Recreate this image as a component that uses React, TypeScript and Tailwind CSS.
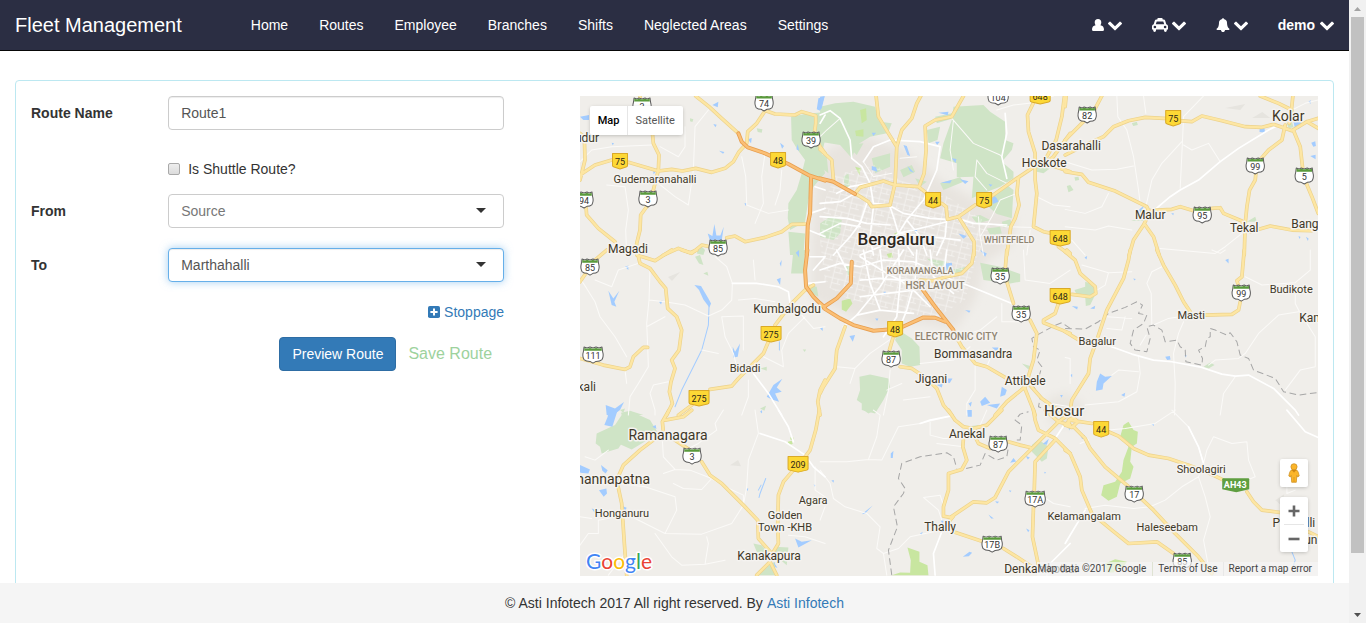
import { useState } from "react";

/* ---------- Icons ---------- */

function UserIcon() {
  return (
    <svg className="h-3 w-3" viewBox="0 0 12 12" fill="currentColor" aria-hidden="true">
      <path d="M6 0C8.2 0 9.3 1.5 9.3 3.5C9.3 4.7 8.9 5.6 8.4 6.2C10.6 6.4 12 8.2 12 10.4Q12 12 10.6 12H1.4Q0 12 0 10.4C0 8.2 1.4 6.4 3.6 6.2C3.1 5.6 2.7 4.7 2.7 3.5C2.7 1.5 3.8 0 6 0Z" />
    </svg>
  );
}

function TaxiIcon() {
  return (
    <svg className="h-3.5 w-4" viewBox="0 0 16 14" aria-hidden="true">
      <path
        fill="currentColor"
        fillRule="evenodd"
        d="M5.3 1.2Q5.3 0 6.3 0H9.7Q10.7 0 10.7 1.2V1.6H11.6Q12.8 1.6 13.2 2.8L14.3 6.2Q16 6.7 16 8.3V11.6H14.8V12.6Q14.8 14 13.4 14Q12 14 12 12.6V11.6H4V12.6Q4 14 2.6 14Q1.2 14 1.2 12.6V11.6H0V8.3Q0 6.7 1.7 6.2L2.8 2.8Q3.2 1.6 4.4 1.6H5.3ZM4.7 3.4L3.8 6.2H12.2L11.3 3.4ZM2.9 7.7A1.3 1.3 0 1 0 2.9 10.3A1.3 1.3 0 1 0 2.9 7.7ZM13.1 7.7A1.3 1.3 0 1 0 13.1 10.3A1.3 1.3 0 1 0 13.1 7.7Z"
      />
    </svg>
  );
}

function BellIcon() {
  return (
    <svg className="h-3.5 w-3.5" viewBox="64 0 1664 1792" fill="currentColor" aria-hidden="true">
      <path d="M1728 1408q0 52-38 90t-90 38h-448q0 106-75 181t-181 75-181-75-75-181h-448q-52 0-90-38t-38-90q50-42 91-88t85-119.5 74.5-158.5 50-206 19.5-260q0-152 117-282.5t307-158.5q-8-19-8-39 0-40 28-68t68-28 68 28 28 68q0 20-8 39 190 28 307 158.5t117 282.5q0 139 19.5 260t50 206 74.5 158.5 85 119.5 91 88z" />
    </svg>
  );
}

function ChevronIcon() {
  return (
    <svg className="h-3.5 w-3.5" viewBox="90 128 1612 1612" fill="currentColor" aria-hidden="true">
      <path d="M1683 808l-742 741q-19 19-45 19t-45-19l-742-741q-19-19-19-45.5t19-45.5l166-165q19-19 45-19t45 19l531 531 531-531q19-19 45-19t45 19l166 165q19 19 19 45.5t-19 45.5z" />
    </svg>
  );
}

function PlusSquareIcon() {
  return (
    <svg className="h-3 w-3" viewBox="0 0 12 12" aria-hidden="true">
      <rect width="12" height="12" rx="1.8" fill="currentColor" />
      <path d="M6 2.4V9.6M2.4 6H9.6" stroke="#fff" strokeWidth="2" />
    </svg>
  );
}

/* ---------- Map data ---------- */

type Tile = {
  x: number;
  y: number;
  park: string;
  grass: string;
  water: string;
  river: string;
  lane: string;
  street: string;
  road: string;
  highway: string;
  border: string;
};

// Each tile covers 245 x 160 map pixels; its paths use three units per pixel.
const TILES: Tile[] = [
  {
    x: 575,
    y: 90,
    park: "M648 80L690 72L750 66V150L738 200L750 250L715 290L700 330L690 395L645 420L638 385L640 340L665 300L680 250L690 210L668 180L650 150ZM640 425L690 430L685 495H645ZM545 115L562 118L560 128L548 126ZM345 85L355 88L352 96L345 94ZM365 490L375 465L390 480L385 495Z",
    grass: "",
    water: "M15 80L42 75V90H25ZM412 45L430 35L428 52ZM730 25L748 20L735 62L725 58ZM415 102l10 2-4 8zM615 158l12 10-6 8zM668 162l4 20-8-4zM518 148l12-4-2 16zM432 182l16 4-4 5zM508 340l8 0-4 8zM398 430L412 438L418 402L424 436L436 436L446 410L440 452L420 448L408 462ZM110 158l7 2-4 6zM235 240l6 8-6 4z",
    river: "",
    lane: "M95 285L150 290L160 360L152 420L155 495M250 280L300 320L340 345L355 240L360 110L400 60M255 170L310 200L330 170L330 110M515 345L512 260L500 200M515 345L580 370L640 360M15 215L50 180L110 170L230 165M570 190L560 260L565 340L540 400M620 240L615 300L600 345",
    street: "M735 100L750 75M720 290L750 300M705 370L750 355M700 420L750 440",
    road: "M362 18L402 50L440 85L490 130M570 62L545 100L518 125L515 160L492 185L475 215L450 235L410 247L362 235L322 243L290 238L250 243L165 218L110 210L60 225L15 255M572 62L600 72L660 75L680 65L722 77V100L718 130L735 170L750 190M195 18V40L228 85L235 160L252 195L250 240L235 300L215 350L197 375L195 420L185 460V495M15 130L28 140L30 210L15 270M33 350L35 375L70 415L120 455M690 402L650 403L620 425L570 442L510 455L480 438L455 443M405 470L380 465L350 490L310 475L265 495",
    highway: "M490 130L500 155L518 172L570 190L640 222L700 255L750 272M708 260L705 370L698 405L695 495",
    border: "",
  },
  {
    x: 820,
    y: 90,
    park: "M0 50L45 40L100 35L165 50L175 90L200 130L150 140L110 165L95 205L60 165L0 155ZM400 50L490 45L510 65L555 95V150L580 160L575 180L545 215L580 245V265L540 290L490 310L455 325L460 260L410 262L410 220L360 205L370 160L395 90ZM500 320L560 285L580 300L575 385L530 372L505 350ZM155 205L210 190V230L165 250ZM320 120L360 110L352 150L325 160ZM180 95L215 100L205 125ZM0 400L30 380L65 390L60 430L40 450L0 440ZM650 225L690 235L670 250L650 245ZM360 280L420 262L430 275L370 300ZM345 80L395 70L400 85L350 100ZM455 380L480 375L510 390L470 400ZM0 190L20 200L25 250L0 230ZM70 260L85 250L90 290L75 300ZM240 240L275 225L285 245L250 262ZM500 415L540 410L545 430L510 435ZM545 395L570 388L578 405L550 412ZM285 265L320 275L300 290ZM80 165L130 160L110 195Z",
    grass: "M120 60L138 55L140 90L125 100ZM105 122L130 118V140L108 138ZM105 230L122 235L118 255ZM222 430L236 425L238 440L226 442Z",
    water: "M0 20L14 18L5 55L0 60ZM155 228L168 232L172 245L155 240ZM250 165L260 168L270 198L262 195ZM262 228L282 248L270 244ZM355 68L385 65L383 76ZM395 205l14 2-3 12zM362 278L395 270L390 280ZM420 268L445 274L435 282ZM280 415l12 3-4 14zM515 310L530 325L535 335L518 342ZM415 430L440 438L430 446ZM155 128L168 128L160 138ZM608 210l10 5-6 14zM505 282l12 2-6 6zM345 155l14 0-8 10z",
    river: "",
    lane: "M640 38L580 45L530 60M395 85L460 160L540 195L545 200M470 210L500 250L560 280M470 210L465 260L500 300M400 90L390 180L400 240M700 18L650 30M650 320L700 345L750 350M590 310L540 330L515 380L480 440L490 495M475 380L480 440M500 400L560 410L640 412M630 420L620 495M215 250L160 260L130 215M290 200L240 205M60 85L20 120L0 140",
    street: "M0 75L30 62L60 85L90 150L95 205L125 230L150 280L160 340L205 345L250 370L330 385L380 388M130 215L160 170L210 150L300 155L360 170L350 240L310 330L260 390L235 430M555 70L560 130L545 200L560 265M380 395L320 410L235 430L180 470L120 495M208 345L220 380L235 430L280 495M0 340L60 335L105 310M150 280L90 290L50 310M0 380L80 385L140 400L210 405M140 340L120 400L90 440L40 495M160 350L150 440L160 495M0 430L60 400L120 410M380 388L375 440L350 495M260 390L300 440L320 495M410 385L460 400L560 405M235 430L330 440L420 450",
    road: "M168 18L175 80L205 130L230 170L225 280L210 345L155 350L145 335L105 310L120 292L190 273L225 285L295 290L320 310M230 170L245 120L275 85L290 40L302 18M430 18L395 80L345 90L315 108L318 180L312 250L297 290M365 340L378 350L382 388L415 380L465 345M515 318L590 265L635 235L645 205M415 380L440 420L462 455V495M640 38L622 75L625 125L645 190V270L650 310L640 410L670 425L695 430M733 18L725 80L708 150L680 200M750 130L700 200L680 215M690 225L750 245M595 262L590 310L597 345L585 385L572 410L560 495M0 178L35 210L40 270M715 470L750 495",
    highway: "M0 265L40 275L105 312",
    border: "",
  },
  {
    x: 1065,
    y: 90,
    park: "M198 392L240 380L235 392ZM200 100L215 95L218 105L204 108ZM5 288L15 285L25 300L10 307ZM28 262L40 260L42 270L30 272ZM665 100L680 95L685 112L670 115ZM545 395L570 380L575 395Z",
    grass: "",
    water: "M583 118L597 112L600 128L583 126ZM685 95L718 98L700 118L688 110ZM730 35l6-5 0 12zM738 158l12-4 2 14-8 2zM735 198l16-4 0 14zM220 360L235 348L232 368L222 372ZM318 370l8 0-2 6zM722 440l8 5-2 8zM700 438l6 3-4 6z",
    river: "",
    lane: "M155 18L158 80L185 120L205 200L220 300L225 340M415 18L355 80L352 150L345 295M350 155L290 220L260 270L243 345M355 165L380 180L430 160L465 215M0 215L80 240L155 238L205 228M130 310L110 350L60 370L0 358M0 410L90 420L130 408L200 420M285 475L450 490L480 470L530 430M235 18L242 70M20 450L60 495M680 60L720 40L759 30",
    street: "M270 358L315 320L345 300L400 270L465 215L520 175L610 120L630 110",
    road: "M0 195L60 165L115 140L145 110L190 92L240 82L310 86M340 92L380 95L410 78L470 92L540 110L590 112L625 103M110 18L85 65L30 120L0 150M3 18L0 50M585 18L640 40L680 60L672 100M683 18L678 65M660 105L650 150L610 180L575 220L570 270L553 300L545 350L540 400L537 495M625 103L680 122L725 95L759 85M725 95L759 115M685 122L705 170L715 260L740 320L759 370M0 245L50 253L70 277L150 303L245 350L250 362L320 358L345 350L385 362M440 355L465 353L475 370L530 393L540 425M555 425L615 408L680 420L740 422M245 385L235 405L205 450L192 495M240 405L265 440L282 495",
    highway: "",
    border: "",
  },
  {
    x: 575,
    y: 250,
    park: "M655 0H690L685 70H648ZM138 488L165 482L205 495H140ZM360 20L375 15L385 45L372 40ZM555 355l20-5 0 12zM385 70l12-5 3 12zM555 475l18-8-5 15zM683 298l10 0-4 8zM700 105L725 110L730 140L710 130Z",
    grass: "",
    water: "M358 105L378 108L400 145L408 160L403 172L385 148L372 120ZM100 122L115 145L133 122L118 155L124 170L110 165ZM473 290L480 305L495 280L488 320L475 322ZM575 440L595 405L622 386L605 412L620 425L600 430L612 455L590 448ZM92 465L120 475L147 456L135 480L115 495H95ZM605 88l12-5-2 22zM662 8l10-8 0 22zM150 50l10-4 0 14zM252 155l10-4-4 12zM614 40l6-10-2 20zM735 235l8-4 0 12z",
    river: "M402 165L400 225L380 300L355 350L320 420L300 470M613 275V300",
    lane: "M15 85L35 115L60 155L75 200L120 260L155 320M225 55L222 150L215 220L218 290L220 350L190 400L165 440L160 495M222 150L270 155L330 165L400 198L440 180L470 150L472 100L455 50L420 20M440 200L505 198V300M440 200L450 260L475 310L485 350M280 395L235 405L225 430L240 480V495M565 320L625 350L620 300L640 250L690 200M490 150L540 145L600 155M535 30L540 90M60 90L110 110L130 60L190 40M270 200L215 230M680 195L715 235L750 230M520 390V440L500 495M150 360L155 400M380 300L430 310",
    street: "M472 100L545 100L610 110L640 125L645 160M535 370L580 430L620 495M715 60L750 20M700 100L750 95M705 20H750",
    road: "M95 0L60 30L15 95M185 0L195 40L225 55L255 95L272 115L278 175L305 200L320 240L312 300L290 330L300 355L288 395L283 425L292 460L275 495M195 18L240 32L290 0M320 0L345 8L365 0M715 105L690 120L650 160L600 225M580 275L565 310L530 345L490 385L470 408L405 418M350 465L310 495M15 325L85 345L150 358L165 350L175 320L205 292H218M750 390L735 420L728 455L735 495",
    highway: "M697 0L690 60L693 110L715 140L750 175",
    border: "",
  },
  {
    x: 820,
    y: 250,
    park: "M118 380L150 373L205 385L210 410L190 450L165 490L125 480V460L110 450L120 420ZM235 240L275 265L298 290L300 345L270 350L245 340V300L225 270ZM320 25L380 35L370 60L350 50ZM480 38L540 50L600 72V95L570 100L490 90ZM605 340l25 8-5 10zM385 60L440 50L420 75ZM75 50L100 45L85 80Z",
    grass: "M65 152L90 145L97 160L78 185L65 178ZM200 12L215 8L218 22L205 24Z",
    water: "M375 40L395 38L398 60L380 62ZM88 258L105 255L98 275ZM480 455L495 440L510 458L485 468ZM545 410L560 420L555 435L540 440ZM375 385l22 0-8 14-14-2zM515 292l20 0-5 12zM165 205l10 0-4 8zM435 180l16 2-4 6zM480 0l20 10-5 10zM445 460L455 455L452 470ZM190 125l8 0-4 10zM500 465L540 460L530 475ZM350 405L370 395L365 412ZM720 435l8 0-4 8z",
    river: "",
    lane: "M50 350L105 355L150 310L215 265M105 355L90 400M465 345L465 420L440 460V495M545 215V160M610 0L615 90L690 100L750 60M450 290L400 330L300 340M210 360L205 420L190 495M530 200L480 240L420 260M545 215L600 215M690 460L750 470M500 350L520 300M245 400L200 420M330 440L250 450",
    street: "M190 260L230 200L240 100L235 0M440 105L490 125L575 160M70 230L110 195L180 110L250 0M300 90L240 90L200 70L120 20M120 90L180 85L240 90L280 120L330 170M0 60L60 40L120 50L190 30L280 35L340 60M130 0L150 100L180 180M50 0L80 60M180 0L190 90M290 0L285 90L260 180L240 230M330 0L340 80L400 130M110 195L180 180L280 190M280 120L200 130L120 140M380 0L370 80L440 105",
    road: "M462 0L455 40L425 70L380 80L340 92L300 90M400 245L425 290L465 340L500 350L560 385L610 390M75 230L50 300L45 355L10 410L0 430M218 265L208 300M240 350L275 355L320 385L350 415L370 465L395 495M560 0L555 60M560 95L580 160M630 210L650 250L640 330L615 410L560 455L525 495M612 410L640 480L645 495M625 400L665 445L735 495M715 160L705 190L670 210V218L750 250M740 0L750 10",
    highway: "M95 35L92 100L50 145L12 170L0 160M12 175L60 205L100 225L160 242L205 238M248 230L310 202L345 203L375 215M305 115L345 170L400 240",
    border: "M750 235L725 218L700 228L660 250L635 265L640 290L660 300L650 330L665 350L655 385L630 395L650 425L660 445L655 470L680 480",
  },
  {
    x: 1065,
    y: 250,
    park: "M28 120L60 110V95L90 105L92 130L75 165L62 168L60 140L35 135ZM415 350L435 337L448 345L430 355Z",
    grass: "",
    water: "M95 395L105 370L120 380L140 378L115 400L112 418L92 422ZM20 168l18 2-2 8zM75 175l15-8-2 10zM300 320l14-2 2 10-10 2zM168 435l12-7-2 12zM480 30l10-4 0 14zM15 375l6-3 0 10zM358 315l6 0-2 8zM58 22l8-4-2 10zM204 85l8 2-4 4z",
    river: "",
    lane: "M355 215L340 250L325 310L330 400L328 495M243 255L225 285M260 225L258 130L245 100L260 65L290 50M375 195L310 205L265 225M540 80L590 105L690 98L735 60V0M690 110V160L700 180L750 260V350L705 360L660 420M700 185L640 195L580 250L540 310L520 325L450 330L430 345M510 380L475 430L465 495M50 45L130 68L200 65M130 68L120 105L95 120M220 320L225 370L215 425L160 455L60 465M220 365L160 360L140 375M0 322L15 325V400M125 200L200 205M125 235L170 240L180 200M440 0L465 10L480 0",
    street: "M125 285L200 312L265 330L320 335L410 352L470 372L510 378L550 375L625 415L690 480L700 495",
    road: "M0 5L30 30L45 70L90 110L92 130L75 140L20 133M195 0L190 30L175 85L125 180L95 270L75 325L70 370L20 450L15 480M275 0L295 45L330 105L355 155L375 185M415 195L500 193L520 180L525 155M520 108L515 92L530 80L537 0M0 245L38 268",
    highway: "",
    border: "M0 235L60 237L100 215L130 190L180 172L215 155L232 165L220 190L245 195L235 220L205 240L195 280L210 300L245 305L255 265L245 230L265 225L290 240L300 275L335 270L345 290L360 300L362 335L410 345L412 325L400 300L420 290L425 265L435 260V235L450 240L485 255L495 248L515 275L525 315L550 325L565 360L630 385L655 425L700 435L759 427",
  },
  {
    x: 575,
    y: 410,
    park: "M140 15L170 5L225 30L250 70L200 100L170 118L130 100L110 60ZM65 70L120 45L160 70L130 115L80 130L75 110L62 100ZM535 400L560 405L585 435L545 425ZM600 410L640 412L635 465L605 440ZM565 475L600 455V495H545ZM135 0L150 -5L145 8Z",
    grass: "M638 95l12-3 3 10-12 3zM645 82l10 0 0 6-8 2z",
    water: "M98 20L100 0H128L112 50L88 45ZM15 165L45 178L40 190L15 188ZM78 165L98 180L92 190L82 182ZM72 240l22-5 2 15-10 10zM660 385L680 395L710 390L670 412ZM232 50l10-5 2 12zM50 295L65 300L60 310ZM143 288l12 5-5 10zM514 235l6 0-3 8zM555 5l6-5 0 10zM716 222l6 4-4 4zM595 455l12 18-6-2z",
    river: "M572 205L555 250L552 262M558 225L550 240",
    lane: "M15 405L40 370L70 370V330L125 320M262 90L265 140L300 178L345 180L410 205L380 238L325 235L295 220M265 190L300 178M130 220L210 230L300 260L305 300L270 370L200 335L150 310M270 370L380 372L470 340L505 285L515 230L520 150L550 70L540 0M240 370L290 440L320 465L390 462L400 400L395 380M410 205L450 230L505 255V285M445 0L420 40L425 60L370 100L340 115M640 375L690 380L750 400M720 170V240L750 260M100 120L60 150L30 140M15 320L50 325M150 430L100 495M390 462L450 450",
    street: "M555 70L630 95L690 135L715 170L750 200M610 0L640 50L655 95",
    road: "M282 0L262 35L265 65M350 0L325 20L270 30M255 75L195 120L145 165L125 210L140 280L148 400L155 495M300 90L345 120M380 155L405 195L440 220L505 285L548 330L550 385L590 430L585 455L545 495M585 455L605 495M733 0L722 60L705 120L690 140M655 180L625 215L610 255L608 340L610 400L592 430M15 215L60 205L125 205",
    highway: "",
    border: "",
  },
  {
    x: 820,
    y: 410,
    park: "M635 105L655 88L685 110L680 145L665 155L635 125ZM440 50L475 45L470 62L445 60ZM130 0L165 0L145 10Z",
    grass: "M262 412L298 425V455L322 465L325 495H215L240 487L270 488L272 450Z",
    water: "M212 130l8-8-2 22-6 0zM125 312L158 286L135 310ZM428 440l20-15 8 3-10 10zM505 313l16 12-8 0zM570 158l10-14 8 10zM668 102l18-16-6 18zM440 0H455V20H443ZM300 370l8-5-4 10zM34 210l8 0-2 8zM617 138l12 4-6 6zM672 185l6 2-4 4zM566 240l8 2-4 4zM525 273l12 2-6 5zM362 330l8 2-2 14zM618 355l10 5-4 6z",
    river: "",
    lane: "M0 155L80 155L145 148L185 150L235 50L300 40L390 18M180 15L170 80L145 148M180 15L160 0M0 180L30 220L40 265L75 290L140 310L180 350L170 415L190 430L235 415L270 380L340 365M365 330L355 300L310 262L360 255L368 280M330 30V75L370 85L430 85M640 240L700 280L750 290M190 430L200 495M0 330L15 290M500 0L480 45M430 110L350 100",
    street: "M365 365L340 430L345 495M680 495L690 460L750 400M300 40L330 30L390 18M705 85L735 40M735 15L700 0",
    road: "M385 0L405 30L430 50L460 55L500 45L545 0M430 85L428 110L440 150L425 178L385 190V240L370 290V318L390 322L460 275L500 278L525 262L565 185L635 115L715 35L750 10M465 80L475 100L510 115M565 95L600 105L630 112M640 0L645 30L655 60L705 85L750 130M675 0L715 35L750 45M705 90L645 155L642 250M640 290L637 380L655 465M400 365L490 395M550 415L590 440L635 470M378 345L400 318",
    highway: "",
    border: "M215 495L205 420L232 350L220 290L250 250L255 235L235 205L245 160L300 140L380 128L400 140L410 175M438 175L480 165L495 130L530 150L560 140L565 110M590 90L600 90L605 45L585 30L600 12L625 5",
  },
  {
    x: 1065,
    y: 410,
    park: "",
    grass: "M175 45L190 35L205 60L218 65L215 100L200 110L195 155L205 170L195 205L165 220L155 260L130 272L108 255L115 225L150 215L170 185L175 150L190 110L165 80ZM120 460L150 447L185 455L175 470L155 475L145 487H125Z",
    water: "M45 75l14 0 2 10-10 2zM258 42l8 0 0 6zM8 45l8 8-4 8z",
    river: "M680 425L690 450L680 480",
    lane: "M320 0L370 50L400 110L415 160L400 200L350 230L300 270L255 290L205 295L120 285L60 295M400 200L420 260L435 320L415 390L430 470M415 160L425 120L445 80L500 100L545 95L550 150L570 200L545 210M330 0L270 40L180 55L130 60M690 150L665 170L665 250L690 240M0 15L40 0M30 55L70 90L45 100",
    street: "M60 300L0 400M665 0L720 65L759 82M370 50L400 110L415 160",
    road: "M0 45L15 30L80 40M130 65L160 78L205 115L250 135L310 145L370 165L430 188L475 210M545 245L565 275L590 300L645 307M0 45L20 52L38 35L25 22L10 30L12 48M25 50L60 85L75 115L120 170L185 225L265 300L330 370L400 440L440 490M0 120L15 130L45 200L50 240L80 310L140 360L190 400L275 395L325 430M730 365L759 380",
    highway: "",
    border: "",
  },
];

type PathKey = Exclude<keyof Tile, "x" | "y">;

function Layer({ name, fill = "none", stroke = "none", width = 0, dash }: { name: PathKey; fill?: string; stroke?: string; width?: number; dash?: string }) {
  return (
    <g fill={fill} stroke={stroke} strokeWidth={width} strokeDasharray={dash} strokeLinejoin="round" strokeLinecap={dash ? "butt" : "round"}>
      {TILES.filter((t) => t[name]).map((t) => (
        <path key={`${t.x}-${t.y}`} d={t[name]} transform={`translate(${t.x} ${t.y}) scale(0.33333)`} />
      ))}
    </g>
  );
}

type Place = [string, number, number, number?, ("start" | "middle" | "end")?];

const TOWNS: Place[] = [
  ["Gudur", 599, 142, 12, "end"],
  ["Gudemaranahalli", 655, 183, 11],
  ["Magadi", 628, 253],
  ["Dasarahalli", 1071, 150],
  ["Hoskote", 1044, 167],
  ["Kolar", 1288, 121, 14],
  ["Malur", 1150, 219],
  ["Tekal", 1244, 232],
  ["Bangarapet", 1291, 228, 12, "start"],
  ["Kumbalgodu", 787, 313],
  ["Bidadi", 745, 372, 11],
  ["Sankali", 596, 391, 12, "end"],
  ["Budikote", 1291, 293, 11],
  ["Kamasamudram", 1299, 322, 12, "start"],
  ["Masti", 1191, 319, 11],
  ["Bagalur", 1097, 345, 11],
  ["Attibele", 1025, 385],
  ["Hosur", 1064, 416, 15],
  ["Bommasandra", 973, 358],
  ["Jigani", 931, 383],
  ["Anekal", 967, 438],
  ["Ramanagara", 668, 440, 14],
  ["Channapatna", 650, 484, 14, "end"],
  ["Honganuru", 622, 517, 11],
  ["Golden", 785, 519, 11],
  ["Town -KHB", 785, 531, 11],
  ["Agara", 813, 504, 11],
  ["Kanakapura", 769, 560],
  ["Thally", 940, 531],
  ["Kelamangalam", 1084, 520, 11],
  ["Haleseebam", 1167, 531, 11],
  ["Shoolagiri", 1201, 473, 11],
  ["Peddalli", 1315, 527, 12, "end"],
  ["un", 1304, 544, 12, "start"],
  ["Denkanikottai", 1004, 573, 12, "start"],
];

const SUBURBS: Place[] = [
  ["WHITEFIELD", 1009, 243, 9],
  ["KORAMANGALA", 920, 274, 9],
  ["HSR LAYOUT", 935, 289, 10],
  ["ELECTRONIC CITY", 956, 340, 10],
];

const NATIONAL: [string, number, number][] = [
  ["75", 620, 161], ["48", 778, 160], ["44", 933, 200], ["75", 984, 200], ["648", 1060, 238], ["648", 1060, 296],
  ["75", 1173, 118], ["275", 771, 334], ["275", 699, 398], ["48", 895, 329], ["209", 798, 464], ["44", 1101, 429], ["648", 1040, 96],
];

const STATE: [string, number, number][] = [
  ["3", 642, 106], ["74", 764, 103], ["39", 811, 140], ["94", 584, 200], ["3", 648, 199], ["85", 718, 248], ["82", 1087, 115],
  ["99", 1255, 166], ["95", 1202, 215], ["5", 1304, 176], ["99", 1241, 293], ["85", 590, 267], ["111", 593, 355], ["35", 1000, 276],
  ["35", 1021, 314], ["87", 891, 359], ["87", 998, 444], ["3", 692, 456], ["17A", 1035, 499], ["17", 1134, 494], ["17B", 992, 544],
  ["85", 1182, 561], ["104", 998, 97],
];

function NationalShield({ label, x, y }: { label: string; x: number; y: number }) {
  const w = label.length > 2 ? 10 : 7.5;
  return (
    <g transform={`translate(${x} ${y})`}>
      <path d={`M${-w} -7.5H${w}V4.5Q${w} 5.5 ${w - 1.5} 6L0 8L${1.5 - w} 6Q${-w} 5.5 ${-w} 4.5Z`} fill="#fdd835" stroke="#d9a928" strokeLinejoin="round" />
      <text y="3.5" textAnchor="middle" fontSize="9" fill="#2e2818">{label}</text>
    </g>
  );
}

function StateShield({ label, x, y }: { label: string; x: number; y: number }) {
  const w = label.length > 2 ? 10 : 9;
  return (
    <g transform={`translate(${x} ${y})`}>
      <path
        d={`M${-w + 1} -8L${-w + 4} -7L-3 -8L0 -7L3 -8L${w - 4} -7L${w - 1} -8L${w - 0.5} -4Q${w + 1} 1 ${w - 1} 4.5Q${w - 3} 6.3 3 6.3L0 8L-3 6.3Q${3 - w} 6.3 ${1 - w} 4.5Q${-w - 1} 1 ${0.5 - w} -4Z`}
        fill="#fff"
        stroke="#5c5c5c"
        strokeLinejoin="round"
      />
      <path d={`M${1.3 - w} -7.2L${-w + 4} -6.4L-3 -7.2L0 -6.4L3 -7.2L${w - 4} -6.4L${w - 1.3} -7.2L${w - 1.2} -4.4H${1.2 - w}Z`} fill="#5a9a3c" />
      <text y="4" textAnchor="middle" fontSize="9" fill="#333">{label}</text>
    </g>
  );
}

function MapDrawing() {
  return (
    <svg
      className="block h-full w-full font-[Roboto,sans-serif]"
      viewBox="580 96 738 480"
      preserveAspectRatio="xMinYMin slice"
      role="img"
      aria-label="Map of Bengaluru and surroundings"
    >
      <defs>
        <pattern id="blocks" width="13" height="11" patternUnits="userSpaceOnUse" patternTransform="rotate(14)">
          <path d="M0 2H13M4 0V11M4 7H13M10 2V7" stroke="#fff" strokeWidth="0.8" fill="none" />
        </pattern>
        <filter id="soft">
          <feGaussianBlur stdDeviation="5" />
        </filter>
      </defs>
      <rect x="580" y="96" width="1200" height="900" fill="#f0eeea" />
      <g filter="url(#soft)">
        <path d="M826 150L860 135L905 150L940 180L985 205L1015 215L1012 245L985 262L975 300L955 330L930 325L905 322L880 330L850 315L812 300L812 240L815 190Z" fill="#e8e4df" />
        <path d="M1045 400L1065 392L1085 405L1075 425L1050 425Z" fill="#e9e6e0" />
      </g>
      <path d="M668 277L680 272L672 281ZM1225 108L1245 104L1240 110ZM1252 118L1262 112L1270 118ZM730 465L738 460L741 466ZM1275 500L1284 494L1281 505Z" fill="#e6e4df" />
      <Layer name="park" fill="#cfe4c6" />
      <Layer name="grass" fill="#c8e6a0" />
      <path d="M835 175L875 165L900 180L945 195L990 225L975 262L965 300L935 318L890 310L850 300L825 285L820 240L825 200Z" fill="url(#blocks)" opacity="0.55" />
      <Layer name="water" fill="#a3ccff" />
      <Layer name="river" stroke="#a3ccff" width={3} />
      <Layer name="lane" stroke="#fbfaf8" width={3} />
      <Layer name="street" stroke="#ffffff" width={5} />
      <Layer name="border" stroke="#a6a6a6" width={3} dash="20 11" />
      <Layer name="road" stroke="#ecd28c" width={11} />
      <Layer name="road" stroke="#fde6a3" width={7} />
      <Layer name="highway" stroke="#e79f50" width={12} />
      <Layer name="highway" stroke="#fbbf75" width={7} />

      {STATE.map(([label, x, y]) => (
        <StateShield key={`${x}-${y}`} label={label} x={x} y={y} />
      ))}
      {NATIONAL.map(([label, x, y]) => (
        <NationalShield key={`${x}-${y}`} label={label} x={x} y={y} />
      ))}
      <g>
        <path d="M1223 478H1248Q1249 478 1249 479V489L1236 492L1222 489V479Q1222 478 1223 478Z" fill="#5f9e40" />
        <text x="1235" y="488" textAnchor="middle" fontSize="9" fontWeight="700" fill="#fff">AH43</text>
      </g>

      <g stroke="#f5f3f0" strokeWidth="3" strokeLinejoin="round" paintOrder="stroke">
        <g fill="#8f8370" fontWeight="500">
          {SUBURBS.map(([name, x, y, size]) => (
            <text key={name} x={x} y={y} fontSize={size} textAnchor="middle">{name}</text>
          ))}
        </g>
        <g fill="#403828">
          {TOWNS.map(([name, x, y, size = 12, anchor = "middle"]) => (
            <text key={name} x={x} y={y} fontSize={size} textAnchor={anchor}>{name}</text>
          ))}
        </g>
        <text x="896" y="245" fontSize="17" fontWeight="500" textAnchor="middle" fill="#2c271e">Bengaluru</text>
      </g>
    </svg>
  );
}

function Pegman() {
  return (
    <svg className="h-5 w-3" viewBox="0 0 12 20" aria-hidden="true">
      <path d="M3 7.2Q6 5.5 9 7.2Q10.6 8.5 11.2 13L9.6 14L8.8 12.5L8.3 19.3H3.7L3.2 12.5L2.4 14L0.8 13Q1.4 8.5 3 7.2Z" fill="#fbb52a" stroke="#c98a1a" strokeWidth="0.7" />
      <path d="M4 7L6 9.3L8 7ZM6 14V19" fill="#d18411" stroke="#c98a1a" strokeWidth="0.6" />
      <circle cx="6" cy="3.8" r="3.1" fill="#fbb52a" stroke="#c98a1a" strokeWidth="0.7" />
    </svg>
  );
}

function GoogleLogo() {
  return (
    <svg className="absolute bottom-0 left-1.5 h-7 w-18 font-[Lato,sans-serif]" viewBox="0 0 72 28" role="img" aria-label="Google">
      <g fontSize="21" strokeLinejoin="round" paintOrder="stroke">
        <text y="21" stroke="#fff" strokeWidth="3">
          <tspan fill="#4285f4">G</tspan>
          <tspan fill="#ea4335">o</tspan>
          <tspan fill="#fbbc05">o</tspan>
          <tspan fill="#4285f4">g</tspan>
          <tspan fill="#34a853">l</tspan>
          <tspan fill="#ea4335">e</tspan>
        </text>
      </g>
    </svg>
  );
}

function RouteMap() {
  return (
    <section className="relative h-120 overflow-hidden bg-[#f0eeea] font-[Roboto,sans-serif]" aria-label="Route map">
      <MapDrawing />
      <div className="absolute left-2.5 top-2.5 flex h-[29px] rounded-xs bg-white text-[11px] shadow-[0_1px_4px_-1px_rgba(0,0,0,0.3)]">
        <button type="button" className="border-r border-[#e6e6e6] px-2 font-medium text-black">Map</button>
        <button type="button" className="px-2 pl-[7px] text-[#565656]">Satellite</button>
      </div>
      <div className="absolute bottom-6 right-2.5 flex flex-col gap-2.5">
        <button type="button" aria-label="Street View" className="flex size-7 items-center justify-center rounded-xs bg-white shadow-[0_1px_4px_-1px_rgba(0,0,0,0.3)]">
          <Pegman />
        </button>
        <div className="flex w-7 flex-col items-center rounded-xs bg-white shadow-[0_1px_4px_-1px_rgba(0,0,0,0.3)]">
          <button type="button" aria-label="Zoom in" className="flex h-[27px] w-7 items-center justify-center">
            <svg className="size-3" viewBox="0 0 12 12" aria-hidden="true"><path d="M6 0.5V11.5M0.5 6H11.5" stroke="#666" strokeWidth="2.6" /></svg>
          </button>
          <div className="h-px w-5 bg-[#e6e6e6]" />
          <button type="button" aria-label="Zoom out" className="flex h-[27px] w-7 items-center justify-center">
            <svg className="size-3" viewBox="0 0 12 12" aria-hidden="true"><path d="M0.5 6H11.5" stroke="#666" strokeWidth="2.6" /></svg>
          </button>
        </div>
      </div>
      <GoogleLogo />
      <div className="absolute bottom-0 right-0 flex h-3.5 items-center bg-[#f5f5f5]/70 text-[10px] text-[#444]">
        <span className="pr-1.5">Map data ©2017 Google</span>
        <a href="#terms" className="border-l border-[#dfe3d3] px-[5px]">Terms of Use</a>
        <a href="#report" className="border-l border-[#e8e8e8] pl-[5px] pr-1.5">Report a map error</a>
      </div>
    </section>
  );
}

/* ---------- Page chrome ---------- */

const LINKS = ["Home", "Routes", "Employee", "Branches", "Shifts", "Neglected Areas", "Settings"];

function Header() {
  return (
    <header className="flex h-[51px] shrink-0 items-center justify-between border-b border-[#080808] bg-[#2b2e43] text-white">
      <div className="flex items-center">
        <a href="#top" className="mr-[39px] px-[15px] text-xl leading-5">Fleet Management</a>
        <nav className="flex gap-px">
          {LINKS.map((l) => (
            <a key={l} href={`#${l.toLowerCase().replace(" ", "-")}`} className="px-[15px] leading-5">{l}</a>
          ))}
        </nav>
      </div>
      <div className="flex">
        <button type="button" aria-label="Users" className="flex items-center gap-1 px-[15px]"><UserIcon /><ChevronIcon /></button>
        <button type="button" aria-label="Cabs" className="flex items-center gap-1 px-[15px]"><TaxiIcon /><ChevronIcon /></button>
        <button type="button" aria-label="Notifications" className="flex items-center gap-1 px-[15px]"><BellIcon /><ChevronIcon /></button>
        <button type="button" className="flex items-center gap-[5px] px-[15px] font-bold leading-5">demo<ChevronIcon /></button>
      </div>
    </header>
  );
}

const PLACES = ["Marthahalli", "Whitefield", "Koramangala", "HSR Layout", "Electronic City"];

function PlaceSelect({ id, label, placeholder, initial }: { id: string; label: string; placeholder: string; initial: string }) {
  const [value, setValue] = useState(initial);
  const look = value
    ? "border-[#66afe9] text-[#555] shadow-[inset_0_1px_1px_rgba(0,0,0,0.075),0_0_8px_rgba(102,175,233,0.6)]"
    : "border-[#ccc] text-[#777] focus:border-[#66afe9]";
  return (
    <div className="mb-5 flex items-center">
      <label htmlFor={id} className="w-3/12 px-[15px] font-bold">{label}</label>
      <div className="w-8/12 px-[15px]">
        <div className="relative">
          <select
            id={id}
            value={value}
            onChange={(e) => setValue(e.target.value)}
            className={`block h-[34px] w-full appearance-none rounded border bg-white px-3 outline-none ${look}`}
          >
            <option value="">{placeholder}</option>
            {PLACES.map((p) => (
              <option key={p} value={p}>{p}</option>
            ))}
          </select>
          <svg className="pointer-events-none absolute right-[18px] top-3.5 h-[5px] w-2.5" viewBox="0 0 10 5" aria-hidden="true">
            <path d="M0 0H10L5 5Z" fill="#333" />
          </svg>
        </div>
      </div>
    </div>
  );
}

function RouteForm() {
  return (
    <form className="-mx-[15px]" onSubmit={(e) => e.preventDefault()}>
      <div className="mb-[29px] flex items-center">
        <label htmlFor="route-name" className="w-3/12 px-[15px] font-bold">Route Name</label>
        <div className="w-8/12 px-[15px]">
          <input
            id="route-name"
            type="text"
            defaultValue="Route1"
            className="block h-[34px] w-full rounded border border-[#ccc] bg-white px-3 text-[#555] shadow-[inset_0_1px_1px_rgba(0,0,0,0.075)] outline-none"
          />
        </div>
      </div>
      <div className="mb-[15px] ml-[25%] flex px-[15px]">
        <label className="flex items-center gap-2 leading-5">
          <input type="checkbox" className="size-3 appearance-none rounded-xs border border-[#a9a9a9] bg-linear-to-b from-[#eee] to-[#dcdcdc] checked:bg-[#337ab7]" />
          Is Shuttle Route?
        </label>
      </div>
      <PlaceSelect id="from" label="From" placeholder="Source" initial="" />
      <PlaceSelect id="to" label="To" placeholder="Destination" initial="Marthahalli" />
      <div className="mr-[8.333%] px-[15px]">
        <div className="mb-[15px] flex justify-end">
          <a href="#stoppage" className="flex items-center gap-1 leading-5 text-[#337ab7]">
            <PlusSquareIcon />
            Stoppage
          </a>
        </div>
        <div className="flex items-center justify-end">
          <button type="submit" className="h-[34px] rounded border border-[#2e6da4] bg-[#337ab7] px-3 text-white">Preview Route</button>
          <button type="button" className="px-3 text-base text-[#9dd29d]">Save Route</button>
        </div>
      </div>
    </form>
  );
}

function ScrollRail() {
  return (
    <div className="flex w-[17px] shrink-0 flex-col items-center bg-[#f1f1f1]" aria-hidden="true">
      <svg className="h-[17px] w-[17px] shrink-0" viewBox="0 0 17 17"><path d="M5 11H12L8.5 7Z" fill="#a3a3a3" /></svg>
      <div className="flex w-[13px] flex-1 flex-col">
        <div className="h-[91%] bg-[#c1c1c1]" />
      </div>
      <svg className="h-[17px] w-[17px] shrink-0" viewBox="0 0 17 17"><path d="M5 7H12L8.5 11Z" fill="#505050" /></svg>
    </div>
  );
}

export default function App() {
  return (
    <div className="flex h-screen bg-white font-['Liberation_Sans',Arial,sans-serif] text-sm text-[#333]">
      <div className="flex min-w-0 flex-1 flex-col">
        <Header />
        <main className="min-h-0 flex-1 overflow-hidden px-[15px] pt-[29px]">
          <div className="flex rounded border border-[#bce8f1] py-[15px]">
            <div className="w-5/12 px-[15px]">
              <RouteForm />
            </div>
            <div className="w-7/12 px-[15px]">
              <RouteMap />
            </div>
          </div>
        </main>
        <footer className="flex h-10 shrink-0 items-center justify-center gap-1 bg-[#f5f5f5]">
          <span>© Asti Infotech 2017 All right reserved. By</span>
          <a href="#asti" className="text-[#337ab7]">Asti Infotech</a>
        </footer>
      </div>
      <ScrollRail />
    </div>
  );
}
